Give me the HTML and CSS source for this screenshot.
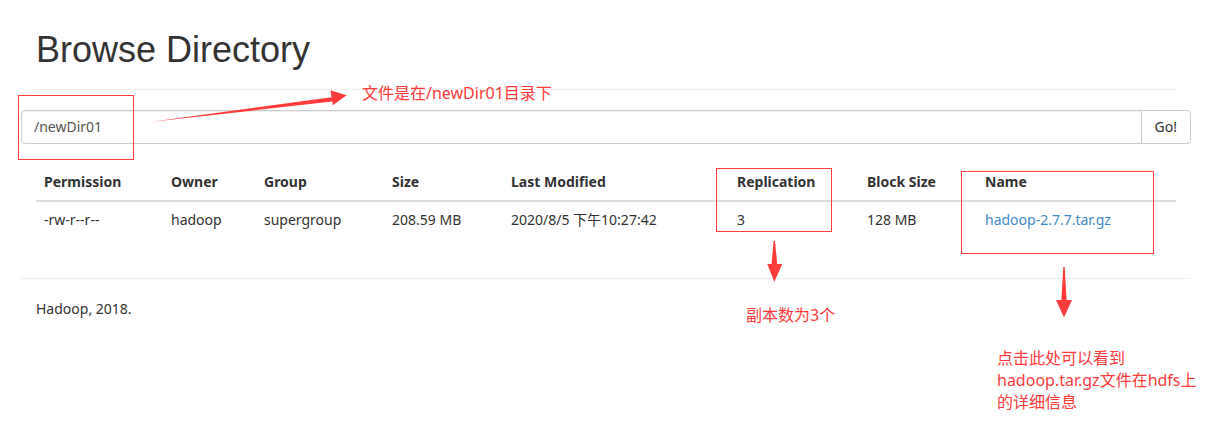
FILE: index.html
```html
<!DOCTYPE html>
<html lang="zh-CN">
<head>
<meta charset="utf-8">
<title>Browsing HDFS</title>
<link rel="stylesheet" href="styles.css">
</head>
<body>
<div class="container">
  <div class="page-header">
    <h1>Browse Directory</h1>
  </div>
  <div class="row">
    <form class="input-group" onsubmit="return false;">
      <input type="text" class="form-control" value="/newDir01">
      <button class="btn" type="submit">Go!</button>
    </form>
  </div>
  <div class="spacer"></div>
  <table class="table">
    <colgroup>
      <col class="c-perm"><col class="c-owner"><col class="c-group"><col class="c-size">
      <col class="c-mod"><col class="c-rep"><col class="c-block"><col class="c-name">
    </colgroup>
    <thead>
      <tr>
        <th>Permission</th><th>Owner</th><th>Group</th><th>Size</th>
        <th>Last Modified</th><th>Replication</th><th>Block Size</th><th>Name</th>
      </tr>
    </thead>
    <tbody>
      <tr>
        <td>-rw-r--r--</td><td>hadoop</td><td>supergroup</td><td>208.59 MB</td>
        <td>2020/8/5 下午10:27:42</td><td>3</td><td>128 MB</td>
        <td><a href="#" class="file-link">hadoop-2.7.7.tar.gz</a></td>
      </tr>
    </tbody>
  </table>
  <div class="row footer">
    <hr>
    <div class="col"><p>Hadoop, 2018.</p></div>
  </div>
</div>

<svg class="marks" width="1222" height="439" viewBox="0 0 1222 439" aria-hidden="true">
  <rect class="box" x="18.5" y="95.5" width="115" height="64"/>
  <rect class="box" x="716.5" y="168.5" width="115" height="63"/>
  <rect class="box" x="961.5" y="171.5" width="192" height="82"/>
  <polygon class="arrow" points="150,122 331.5,97.2 330.5,90.3 346.7,95.3 332.7,105.3 332.3,101.6"/>
  <polygon class="arrow" points="773.6,241 775,241 777.2,264 782.3,264 774.3,281.7 767.3,264 771.5,264"/>
  <polygon class="arrow" points="1063.3,267 1064.7,267 1066.6,300 1072,300 1064,317.5 1056,300 1061.4,300"/>
</svg>
<div class="note note-dir">文件是在/newDir01目录下</div>
<div class="note note-rep">副本数为3个</div>
<div class="note note-name">点击此处可以看到<br>hadoop.tar.gz文件在hdfs上<br>的详细信息</div>
</body>
</html>
```
FILE: styles.css
```css
* { box-sizing: border-box; }
html, body { margin: 0; padding: 0; background: #fff; }
body {
  font-family: "Noto Sans", "Noto Sans CJK SC", sans-serif;
  font-size: 14px;
  line-height: 20px;
  color: #333;
  width: 1222px;
  height: 439px;
  overflow: hidden;
}
.container {
  width: 1170px;
  margin-left: 21px;
  padding: 0 15px;
}
.page-header {
  padding-top: 30px;
  padding-bottom: 9px;
  border-bottom: 1px solid #eee;
  margin-bottom: 20px;
}
.page-header h1 {
  margin: 0 0 10px;
  font-family: "Liberation Sans", Arial, sans-serif;
  font-size: 36px;
  font-weight: 400;
  line-height: 39.6px;
  color: #333;
}
.row { margin: 0 -15px; display: flow-root; }
.input-group {
  display: flex;
  margin: 0;
}
.form-control {
  flex: 1;
  height: 34px;
  padding: 6px 12px;
  font-family: inherit;
  font-size: 14px;
  line-height: 20px;
  color: #555;
  background: #fff;
  border: 1px solid #ccc;
  border-radius: 4px 0 0 4px;
  box-shadow: inset 0 1px 1px rgba(0, 0, 0, .075);
  outline: none;
}
.btn {
  height: 34px;
  margin-left: -1px;
  padding: 6px 13px;
  font-family: inherit;
  font-size: 14px;
  line-height: 20px;
  color: #333;
  background: #fff;
  border: 1px solid #ccc;
  border-radius: 0 4px 4px 0;
}
.spacer { height: 20px; }
.table {
  width: 1140px;
  table-layout: fixed;
  border-collapse: collapse;
  border-spacing: 0;
  margin-bottom: 20px;
}
.c-perm { width: 127px; }
.c-owner { width: 93px; }
.c-group { width: 128px; }
.c-size { width: 119px; }
.c-mod { width: 226px; }
.c-rep { width: 130px; }
.c-block { width: 118px; }
.c-name { width: 199px; }
.table th, .table td {
  padding: 8px;
  line-height: 20px;
  text-align: left;
  vertical-align: top;
  white-space: nowrap;
}
.table th {
  font-weight: 700;
  border-bottom: 2px solid #ddd;
}
.file-link { color: #428bca; text-decoration: none; }
.footer hr {
  margin: 20px 0;
  border: 0;
  border-top: 1px solid #eee;
  height: 0;
}
.footer .col { padding: 0 15px; }
.footer p { margin: 0 0 10px; }

.marks {
  position: absolute;
  left: 0;
  top: 0;
  pointer-events: none;
}
.box { fill: none; stroke: #ff3b3b; stroke-width: 1; }
.arrow { fill: #ff3b3b; stroke: none; }
.note {
  position: absolute;
  font-family: "Noto Sans", "Noto Sans CJK SC", sans-serif;
  font-size: 16px;
  line-height: 22px;
  color: #ff3b3b;
  white-space: nowrap;
}
.note-dir { left: 362px; top: 82px; }
.note-rep { left: 746px; top: 304px; }
.note-name { left: 997px; top: 347px; }
```
